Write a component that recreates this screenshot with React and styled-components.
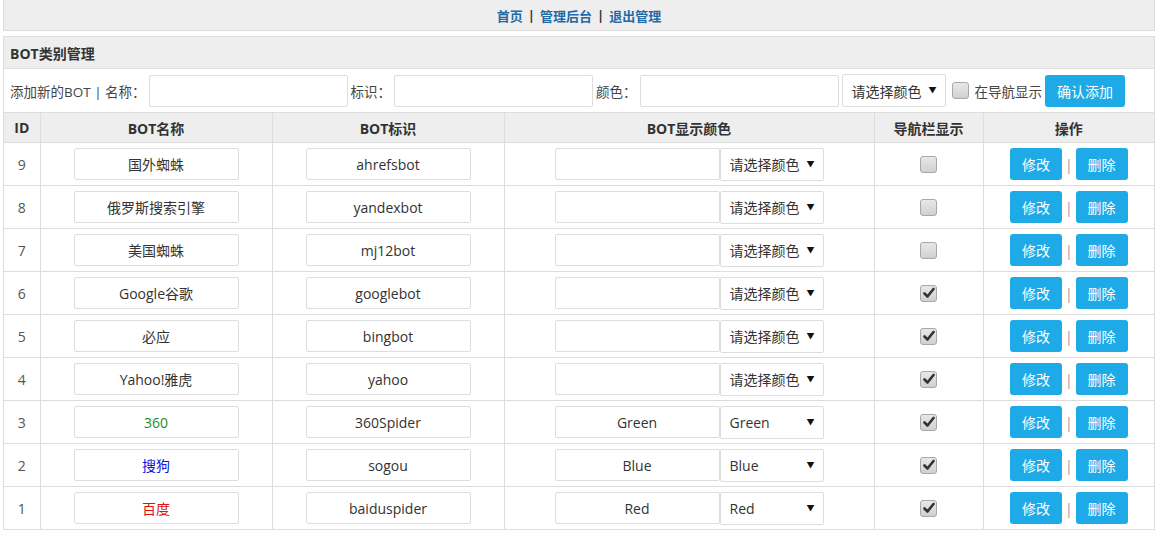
import React from "react";
import styled, { createGlobalStyle } from "styled-components";

const GlobalStyle = createGlobalStyle`
  body {
    margin: 0;
    background: #fff;
    font-family: "Open Sans", "Noto Sans CJK SC", sans-serif;
    font-size: 14px;
    color: #333;
  }
`;

const bots = [
  { id: 9, name: "国外蜘蛛", tag: "ahrefsbot", color: "", nav: false },
  { id: 8, name: "俄罗斯搜索引擎", tag: "yandexbot", color: "", nav: false },
  { id: 7, name: "美国蜘蛛", tag: "mj12bot", color: "", nav: false },
  { id: 6, name: "Google谷歌", tag: "googlebot", color: "", nav: true },
  { id: 5, name: "必应", tag: "bingbot", color: "", nav: true },
  { id: 4, name: "Yahoo!雅虎", tag: "yahoo", color: "", nav: true },
  { id: 3, name: "360", tag: "360Spider", color: "Green", nav: true },
  { id: 2, name: "搜狗", tag: "sogou", color: "Blue", nav: true },
  { id: 1, name: "百度", tag: "baiduspider", color: "Red", nav: true },
];

const textColors = { Green: "#1f8a1f", Blue: "#1010e0", Red: "#dd1111" };

const CheckBox = ({ checked }) => (
  <Check>
    {checked && (
      <svg width="12" height="12" viewBox="0 0 12 12">
        <path d="M1.5 6.5 L4.5 9.5 L10.5 2" fill="none" stroke="#333" strokeWidth="2.6" strokeLinecap="round" strokeLinejoin="round" />
      </svg>
    )}
  </Check>
);

const ColorSelect = ({ value, width }) => (
  <SelectBox $width={width}>
    <span>{value || "请选择颜色"}</span>
    <Arrow>▼</Arrow>
  </SelectBox>
);

const App = () => {
  return (
    <Page>
      <GlobalStyle />
      <TopBar>
        <TopLink>首页</TopLink>
        <Sep>|</Sep>
        <TopLink>管理后台</TopLink>
        <Sep>|</Sep>
        <TopLink>退出管理</TopLink>
      </TopBar>
      <Panel>
        <PanelTitle>BOT类别管理</PanelTitle>
        <AddRow>
          <Label>添加新的BOT | 名称：</Label>
          <Field $width={199} />
          <Label>标识：</Label>
          <Field $width={199} />
          <Label>颜色：</Label>
          <Field $width={199} />
          <ColorSelect width={104} />
          <CheckBox />
          <Label>在导航显示</Label>
          <Button $width={80}>确认添加</Button>
        </AddRow>
        <Table>
          <colgroup>
            <col style={{ width: 36 }} />
            <col style={{ width: 232 }} />
            <col style={{ width: 232 }} />
            <col style={{ width: 370 }} />
            <col style={{ width: 109 }} />
            <col />
          </colgroup>
          <thead>
            <tr>
              <Th>ID</Th>
              <Th>BOT名称</Th>
              <Th>BOT标识</Th>
              <Th>BOT显示颜色</Th>
              <Th>导航栏显示</Th>
              <Th>操作</Th>
            </tr>
          </thead>
          <tbody>
            {bots.map((bot) => (
              <tr key={bot.id}>
                <IdCell>{bot.id}</IdCell>
                <Td>
                  <CellInput $color={textColors[bot.color]}>{bot.name}</CellInput>
                </Td>
                <Td>
                  <CellInput>{bot.tag}</CellInput>
                </Td>
                <Td>
                  <ColorPair>
                    <CellInput>{bot.color}</CellInput>
                    <ColorSelect value={bot.color} width={104} />
                  </ColorPair>
                </Td>
                <Td>
                  <Center>
                    <CheckBox checked={bot.nav} />
                  </Center>
                </Td>
                <Td>
                  <Actions>
                    <Button $width={52}>修改</Button>
                    <ActionSep>|</ActionSep>
                    <Button $width={52}>删除</Button>
                  </Actions>
                </Td>
              </tr>
            ))}
          </tbody>
        </Table>
      </Panel>
    </Page>
  );
};

export default App;

const Page = styled.div`
  padding: 0 3px;
`;

const TopBar = styled.div`
  height: 30px;
  background: #eeeeee;
  border: 1px solid #dddddd;
  border-top: 0;
  display: flex;
  justify-content: center;
  align-items: center;
  gap: 5px;
  font-size: 13px;
  font-weight: bold;
`;

const TopLink = styled.a`
  color: #1f6aa8;
  cursor: pointer;
`;

const Sep = styled.span`
  color: #333;
`;

const Panel = styled.div`
  margin-top: 5px;
  border: 1px solid #dddddd;
`;

const PanelTitle = styled.div`
  height: 31px;
  background: #eeeeee;
  border-bottom: 1px solid #dddddd;
  display: flex;
  align-items: center;
  padding-left: 6px;
  font-size: 14px;
  font-weight: bold;
  color: #333;
`;

const AddRow = styled.div`
  height: 43px;
  display: flex;
  align-items: center;
  padding-left: 6px;
  gap: 3px;
  border-bottom: 1px solid #dddddd;
  font-size: 13.5px;
`;

const Label = styled.span`
  color: #444;
  white-space: nowrap;
`;

const Field = styled.div`
  width: ${(p) => p.$width}px;
  height: 32px;
  box-sizing: border-box;
  border: 1px solid #dddddd;
  border-radius: 2px;
  background: #fff;
`;

const SelectBox = styled.div`
  position: relative;
  width: ${(p) => p.$width}px;
  height: 33px;
  box-sizing: border-box;
  border: 1px solid #dddddd;
  border-radius: 2px;
  background: #fff;
  display: flex;
  align-items: center;
  padding-left: 9px;
  font-size: 14px;
  color: #333;
`;

const Arrow = styled.span`
  position: absolute;
  right: 8px;
  top: 9px;
  font-size: 8px;
  color: #111;
`;

const Check = styled.span`
  width: 17px;
  height: 17px;
  box-sizing: border-box;
  border: 1px solid #a8a8a8;
  border-radius: 3px;
  background: linear-gradient(#e8e8e8, #d0d0d0);
  display: inline-flex;
  align-items: center;
  justify-content: center;
  margin: 0 3px;
`;

const Button = styled.button`
  width: ${(p) => p.$width}px;
  height: 32px;
  border: 0;
  border-radius: 3px;
  background: #1eaae7;
  color: #fff;
  font-family: "Open Sans", "Noto Sans CJK SC", sans-serif;
  font-size: 14px;
  padding: 0;
`;

const Table = styled.table`
  width: 100%;
  border-collapse: collapse;
  table-layout: fixed;
`;

const Th = styled.th`
  height: 29px;
  background: #eeeeee;
  border: 1px solid #dddddd;
  border-top: 0;
  font-size: 14px;
  font-weight: bold;
  color: #333;
  padding: 0;
  &:first-child {
    border-left: 0;
  }
  &:last-child {
    border-right: 0;
  }
`;

const Td = styled.td`
  height: 42px;
  border: 1px solid #dddddd;
  padding: 0;
  &:last-child {
    border-right: 0;
  }
  tr:last-child > & {
    border-bottom: 0;
  }
`;

const IdCell = styled(Td)`
  text-align: center;
  color: #555;
  border-left: 0;
`;

const CellInput = styled.div`
  width: 165px;
  height: 32px;
  margin: 0 auto;
  box-sizing: border-box;
  border: 1px solid #dddddd;
  border-radius: 2px;
  display: flex;
  align-items: center;
  justify-content: center;
  color: ${(p) => p.$color || "#333"};
`;

const ColorPair = styled.div`
  display: flex;
  justify-content: center;
  align-items: center;
  & > ${CellInput} {
    margin: 0;
  }
`;

const Center = styled.div`
  display: flex;
  justify-content: center;
`;

const Actions = styled.div`
  display: flex;
  justify-content: center;
  align-items: center;
  gap: 2px;
`;

const ActionSep = styled.span`
  color: #999;
  padding: 0 1px;
`;
